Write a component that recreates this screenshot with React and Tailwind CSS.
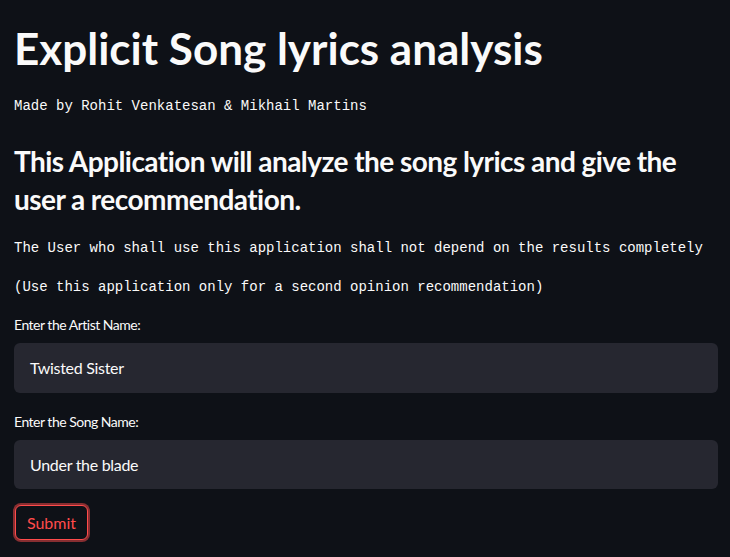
export default function App() {
  const sans = { fontFamily: '"Source Sans Pro", Lato, "Noto Sans", sans-serif' };
  return (
    <div className="min-h-[557px] w-[730px] bg-[#0e1117] text-[#fafafa] px-[14px] pt-[20px]" style={sans}>
      <h1 className="text-[44px] leading-[56px] font-bold">Explicit Song lyrics analysis</h1>
      <p className="mt-[18px] text-[14px] leading-[24px] font-['Liberation_Mono',monospace]">Made by Rohit Venkatesan &amp; Mikhail Martins</p>
      <h3 className="mt-[24px] text-[28px] leading-[38px] font-bold tracking-[-0.55px]">This Application will analyze the song lyrics and give the user a recommendation.</h3>
      <p className="mt-[18px] text-[14px] leading-[24px] font-['Liberation_Mono',monospace]">The User who shall use this application shall not depend on the results completely</p>
      <p className="mt-[15px] text-[14px] leading-[24px] font-['Liberation_Mono',monospace]">(Use this application only for a second opinion recommendation)</p>
      <label className="block mt-[16px] text-[14px] leading-[20px] tracking-[-0.5px]">Enter the Artist Name:</label>
      <div className="mt-[8px] h-[50px] w-[704px] rounded-[6px] bg-[#262730] px-[16px] flex items-center text-[16px] tracking-[-0.3px]">Twisted Sister</div>
      <label className="block mt-[19px] text-[14px] leading-[20px] tracking-[-0.5px]">Enter the Song Name:</label>
      <div className="mt-[8px] h-[49px] w-[704px] rounded-[6px] bg-[#262730] px-[16px] flex items-center text-[16px] tracking-[-0.3px]">Under the blade</div>
      <div className="mt-[16px] pl-[1px]">
        <button className="h-[35px] w-[73px] rounded-[6px] border border-[#ff4b4b] ring-2 ring-[#ff4b4b]/50 text-[#ff4b4b] text-[16px] bg-[#0e1117]">Submit</button>
      </div>
    </div>
  );
}
